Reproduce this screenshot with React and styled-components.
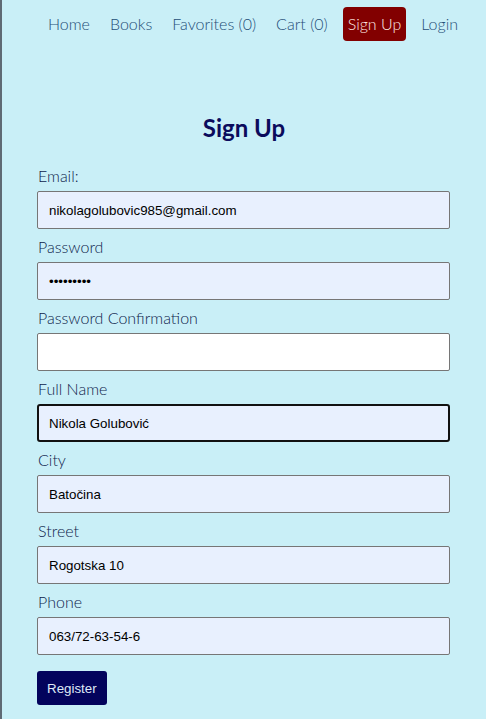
import React from "react";
import styled, { createGlobalStyle } from "styled-components";

const GlobalStyle = createGlobalStyle`
  body {
    margin: 0;
    background: #c9eff7;
    font-family: "Lato", "Liberation Sans", sans-serif;
  }
`;

const fields = [
  { label: "Email:", value: "nikolagolubovic985@gmail.com", type: "text", filled: true },
  { label: "Password", value: "123456789", type: "password", filled: true },
  { label: "Password Confirmation", value: "", type: "password", filled: false },
  { label: "Full Name", value: "Nikola Golubović", type: "text", filled: true, focused: true },
  { label: "City", value: "Batočina", type: "text", filled: true },
  { label: "Street", value: "Rogotska 10", type: "text", filled: true },
  { label: "Phone", value: "063/72-63-54-6", type: "text", filled: true },
];

const App = () => {
  return (
    <Page>
      <GlobalStyle />
      <NavBar>
        <NavLink>Home</NavLink>
        <NavLink>Books</NavLink>
        <NavLink>Favorites (0)</NavLink>
        <NavLink>Cart (0)</NavLink>
        <NavLink active>Sign Up</NavLink>
        <NavLink>Login</NavLink>
      </NavBar>
      <Title>Sign Up</Title>
      <Form onSubmit={(e) => e.preventDefault()}>
        {fields.map((f) => (
          <Field key={f.label}>
            <Label>{f.label}</Label>
            <Input
              type={f.type}
              defaultValue={f.value}
              filled={f.filled ? 1 : 0}
              focused={f.focused ? 1 : 0}
              spellCheck={false}
            />
          </Field>
        ))}
        <RegisterBtn type="submit">Register</RegisterBtn>
      </Form>
    </Page>
  );
};

const Page = styled.div`
  min-height: 719px;
  box-sizing: border-box;
  border-left: 2px solid #5f6a74;
`;

const NavBar = styled.nav`
  height: 48px;
  display: flex;
  justify-content: flex-end;
  align-items: center;
  gap: 10px;
  padding-right: 23px;
`;

const NavLink = styled.a`
  font-size: 16px;
  font-weight: 300;
  line-height: 26px;
  padding: 4px 5px;
  border-radius: 4px;
  cursor: pointer;
  color: ${(p) => (p.active ? "#fde8e0" : "#1f4e78")};
  background: ${(p) => (p.active ? "#820000" : "transparent")};
`;

const Title = styled.h2`
  margin: 64px 0 0;
  text-align: center;
  font-size: 24px;
  line-height: 32px;
  font-weight: 700;
  color: #0b0b5c;
`;

const Form = styled.form`
  display: flex;
  flex-direction: column;
  align-items: flex-start;
  padding: 14px 36px 0 35px;
`;

const Field = styled.div`
  width: 100%;
  display: flex;
  flex-direction: column;
`;

const Label = styled.label`
  font-size: 16px;
  font-weight: 300;
  line-height: 20px;
  margin: 8px 0 5px 1px;
  color: #0e1d4c;
`;

const Input = styled.input`
  box-sizing: border-box;
  width: 100%;
  height: 38px;
  padding: 0 ${(p) => (p.focused ? "10px" : "11px")};
  font-family: "Liberation Sans", Arial, sans-serif;
  font-size: 13.33px;
  color: #000;
  border-radius: ${(p) => (p.focused ? "3px" : "2px")};
  border: ${(p) => (p.focused ? "2px solid #111" : "1px solid #767676")};
  background: ${(p) => (p.filled ? "#e8f0fe" : "#ffffff")};
  outline: none;
`;

const RegisterBtn = styled.button`
  margin-top: 16px;
  height: 34px;
  padding: 0 10px;
  border: none;
  border-radius: 3px;
  background: #03035c;
  color: #dfe9f7;
  font-family: "Liberation Sans", Arial, sans-serif;
  font-size: 13.33px;
  cursor: pointer;
`;

export default App;
